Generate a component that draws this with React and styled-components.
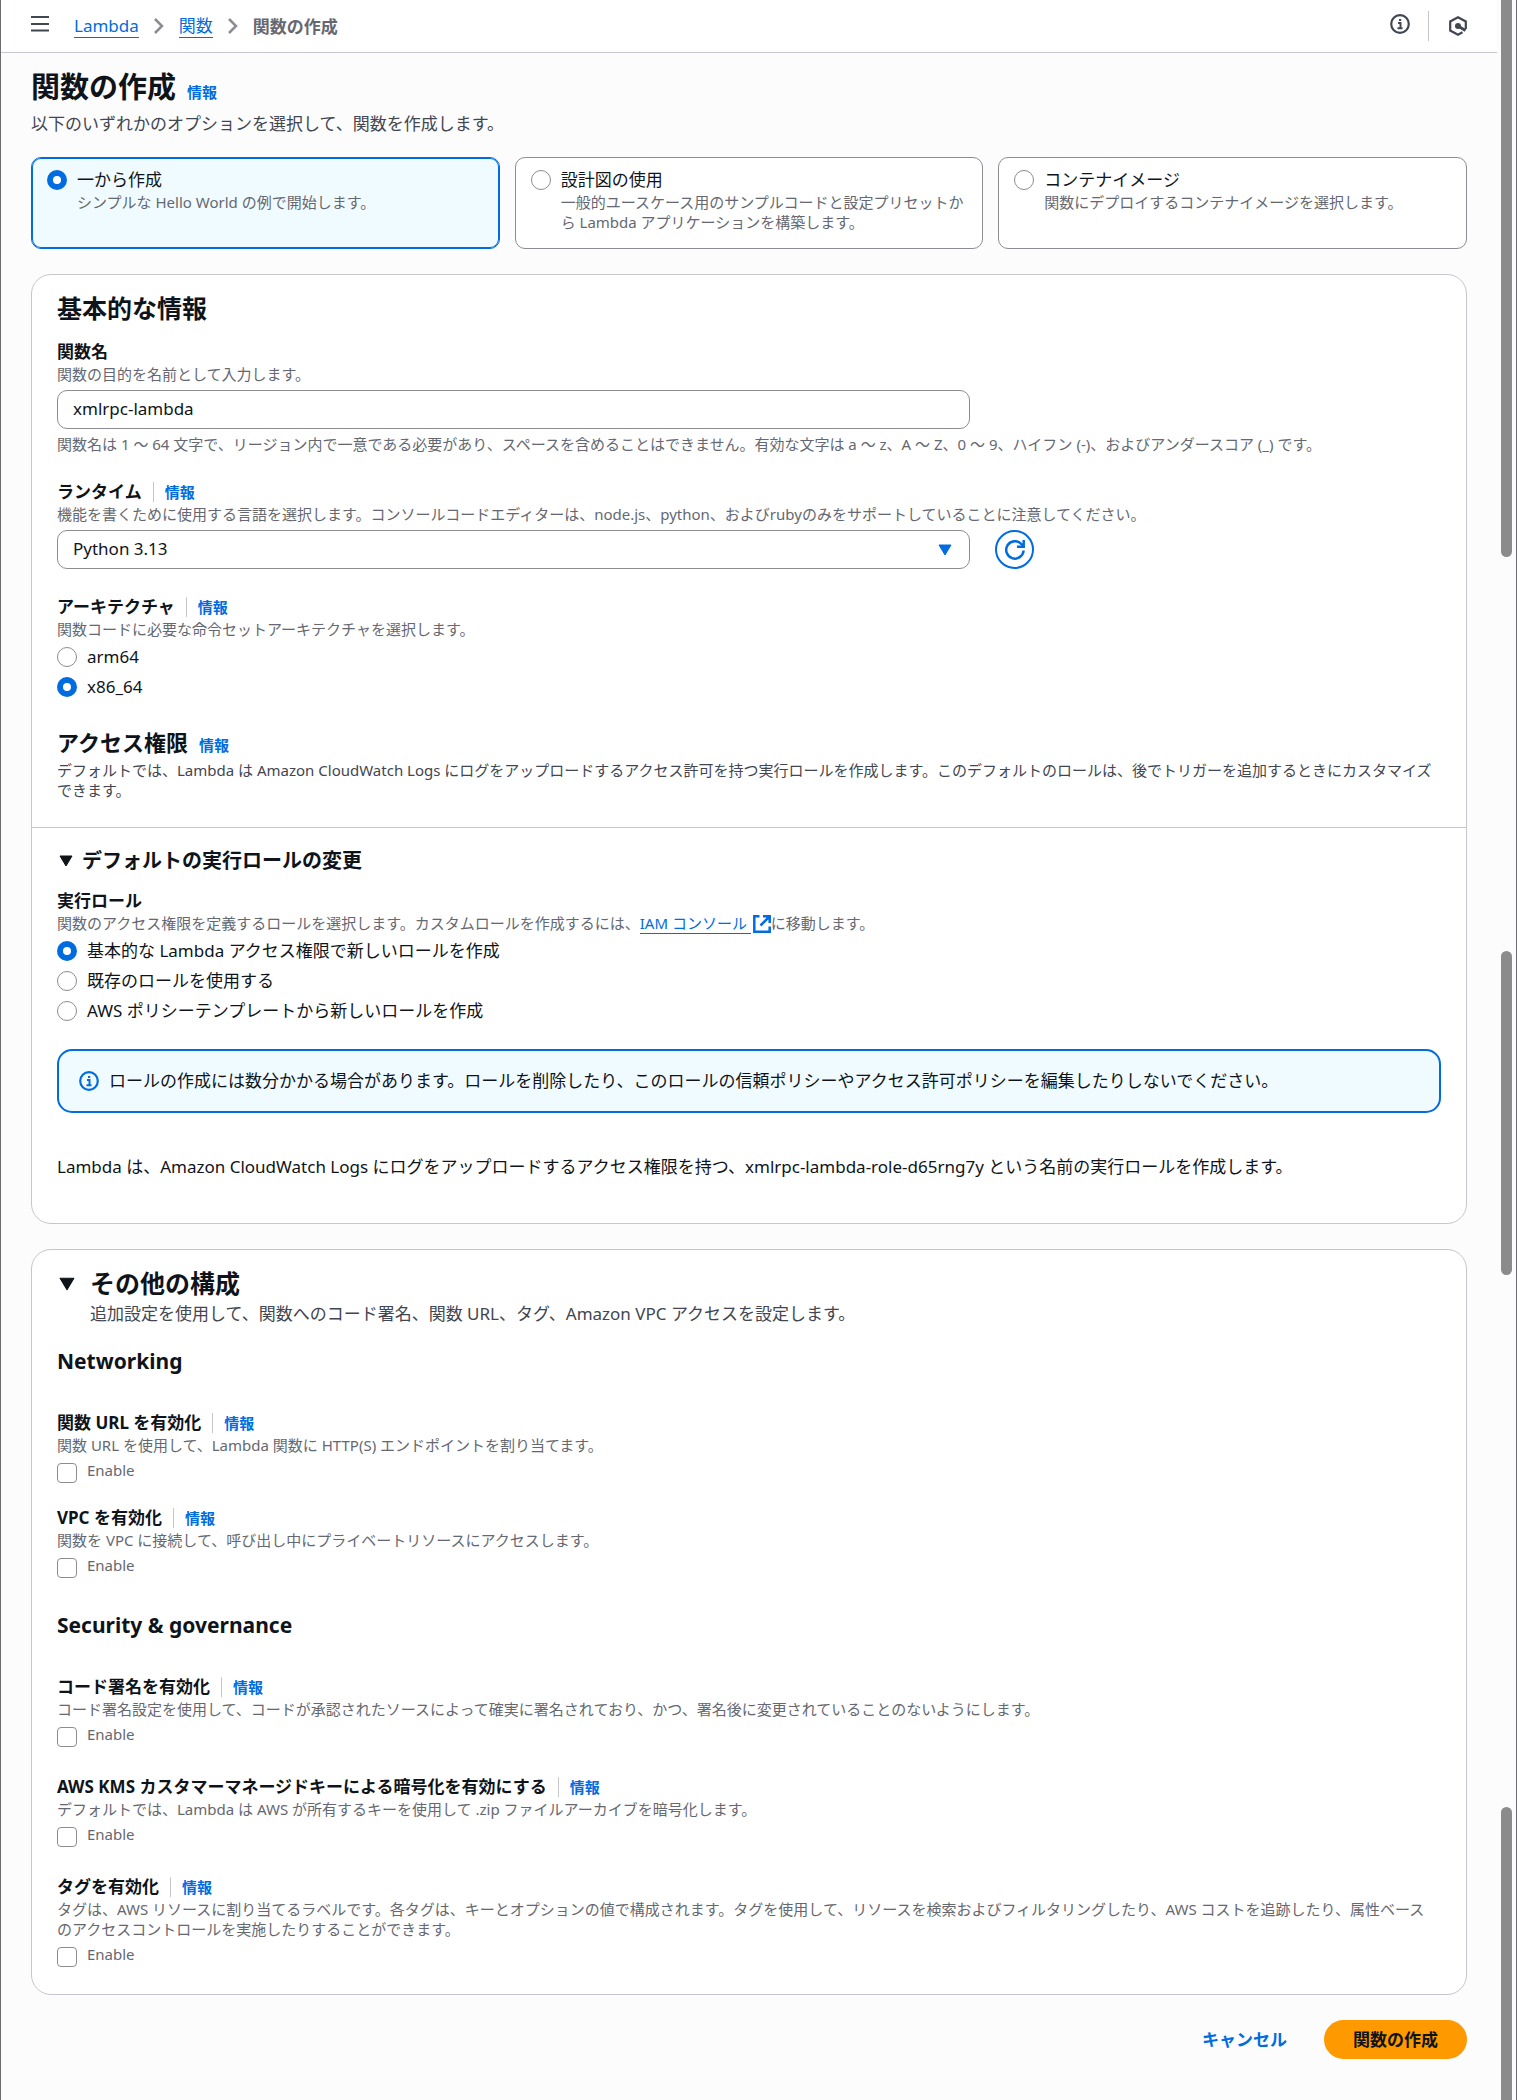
import React, { useState } from 'react';
import styled, { createGlobalStyle } from 'styled-components';

const tiles = [
    { id: 'scratch', title: '一から作成', text: 'シンプルな Hello World の例で開始します。' },
    { id: 'blueprint', title: '設計図の使用', text: '一般的ユースケース用のサンプルコードと設定プリセットから Lambda アプリケーションを構築します。' },
    { id: 'container', title: 'コンテナイメージ', text: '関数にデプロイするコンテナイメージを選択します。' },
];

const architectures = ['arm64', 'x86_64'];

const roles = [
    '基本的な Lambda アクセス権限で新しいロールを作成',
    '既存のロールを使用する',
    'AWS ポリシーテンプレートから新しいロールを作成',
];

const networking = [
    { id: 'url', label: '関数 URL を有効化', text: '関数 URL を使用して、Lambda 関数に HTTP(S) エンドポイントを割り当てます。' },
    { id: 'vpc', label: 'VPC を有効化', text: '関数を VPC に接続して、呼び出し中にプライベートリソースにアクセスします。' },
];

const security = [
    { id: 'signing', label: 'コード署名を有効化', text: 'コード署名設定を使用して、コードが承認されたソースによって確実に署名されており、かつ、署名後に変更されていることのないようにします。' },
    { id: 'kms', label: 'AWS KMS カスタマーマネージドキーによる暗号化を有効にする', text: 'デフォルトでは、Lambda は AWS が所有するキーを使用して .zip ファイルアーカイブを暗号化します。' },
    { id: 'tags', label: 'タグを有効化', text: 'タグは、AWS リソースに割り当てるラベルです。各タグは、キーとオプションの値で構成されます。タグを使用して、リソースを検索およびフィルタリングしたり、AWS コストを追跡したり、属性ベースのアクセスコントロールを実施したりすることができます。' },
];

const MenuIcon = () => (
    <svg width="18" height="18" viewBox="0 0 18 18" stroke="#424650" strokeWidth="2">
        <path d="M0 2h18M0 9h18M0 15.500h18" />
    </svg>
);

const ChevronIcon = () => (
    <svg width="10" height="16" viewBox="0 0 10 16" fill="none" stroke="#8c8c94" strokeWidth="2.500">
        <path d="M1 1l7 7-7 7" />
    </svg>
);

const InfoIcon = () => (
    <svg width="20" height="20" viewBox="0 0 20 20" fill="none" stroke="currentColor" strokeWidth="2.200">
        <circle cx="10" cy="10" r="8.800" />
        <path d="M8 9h2.500v5M7.500 14.200h5M9 6h2.200" strokeWidth="2" />
    </svg>
);

const HexagonIcon = () => (
    <svg width="20" height="20" viewBox="0 0 20 20" fill="none" stroke="#424650" strokeWidth="2.200">
        <path d="M17.800 13V5.500L10 1.300 2.200 5.500v9L10 18.700l4.500-2.400" />
        <circle cx="10" cy="10" r="3" fill="#424650" stroke="none" />
        <path d="M10 10l7.500 4.500" strokeWidth="2.800" />
    </svg>
);

const RefreshIcon = () => (
    <svg width="20" height="20" viewBox="0 0 20 20" fill="none" stroke="#006ce0" strokeWidth="2.500">
        <path d="M18.600 10.500A8.700 8.700 0 1 1 16.500 4.200l2 2" />
        <path d="M18.700 0v6.700H12" />
    </svg>
);

const ExternalIcon = () => (
    <svg width="18" height="18" viewBox="0 0 18 18" fill="none" stroke="#006ce0" strokeWidth="2.500">
        <path d="M6.500 1.300H1.300v15.400h15.400V11.500M10 1.300h6.700V8M16.500 1.500L7.500 10.500" />
    </svg>
);

const Caret = ({ size = 14, color = '#0f141a' }) => (
    <svg width={size} height={size} viewBox="0 0 14 14" fill={color} stroke={color} strokeWidth="1" strokeLinejoin="round">
        <path d="M1 2h12L7 12z" />
    </svg>
);

const Info = () => <InfoLink href="#info">情報</InfoLink>;

const FieldHead = ({ label, htmlFor, info }) => (
    <LabelRow>
        <FieldLabel as={htmlFor ? 'label' : 'span'} htmlFor={htmlFor}>{label}</FieldLabel>
        {info && <LabelDivider />}
        {info && <Info />}
    </LabelRow>
);

const RadioList = ({ name, options, value, onChange }) => (
    <Options role="radiogroup" aria-label={name}>
        {options.map((option) => (
            <Option key={option}>
                <Radio name={name} checked={value === option} onChange={() => onChange(option)} />
                {option}
            </Option>
        ))}
    </Options>
);

const EnableField = ({ item }) => (
    <div>
        <FieldHead label={item.label} info />
        <HelpText id={`${item.id}-text`}>{item.text}</HelpText>
        <EnableLabel>
            <Checkbox aria-describedby={`${item.id}-text`} />
            Enable
        </EnableLabel>
    </div>
);

const App = () => {
    const [tile, setTile] = useState('scratch');
    const [name, setName] = useState('xmlrpc-lambda');
    const [arch, setArch] = useState('x86_64');
    const [role, setRole] = useState(roles[0]);

    return (
        <Shell>
            <GlobalStyle />
            <Main>
                <TopBar>
                    <IconButton $raised aria-label="メニュー"><MenuIcon /></IconButton>
                    <Breadcrumbs>
                        <CrumbLink href="#lambda">Lambda</CrumbLink>
                        <ChevronIcon />
                        <CrumbLink href="#functions">関数</CrumbLink>
                        <ChevronIcon />
                        <CurrentCrumb>関数の作成</CurrentCrumb>
                    </Breadcrumbs>
                    <IconButton $raised aria-label="情報"><InfoIcon /></IconButton>
                    <BarDivider />
                    <IconButton aria-label="ツール"><HexagonIcon /></IconButton>
                </TopBar>

                <Content>
                    <TitleRow>
                        <PageTitle>関数の作成</PageTitle>
                        <Info />
                    </TitleRow>
                    <Lead>以下のいずれかのオプションを選択して、関数を作成します。</Lead>

                    <Tiles>
                        {tiles.map((item) => (
                            <Tile key={item.id} $selected={tile === item.id}>
                                <Radio name="method" checked={tile === item.id} onChange={() => setTile(item.id)} />
                                <div>
                                    <TileTitle>{item.title}</TileTitle>
                                    <Description>{item.text}</Description>
                                </div>
                            </Tile>
                        ))}
                    </Tiles>

                    <Card>
                        <CardSection>
                            <SectionTitle>基本的な情報</SectionTitle>
                            <Fields>
                                <div>
                                    <FieldHead label="関数名" htmlFor="name" />
                                    <Description>関数の目的を名前として入力します。</Description>
                                    <ControlRow>
                                        <ControlBox>
                                            <TextInput id="name" value={name} onChange={(e) => setName(e.target.value)} />
                                        </ControlBox>
                                    </ControlRow>
                                    <Constraint>関数名は 1 ～ 64 文字で、リージョン内で一意である必要があり、スペースを含めることはできません。有効な文字は a ～ z、A ～ Z、0 ～ 9、ハイフン (-)、およびアンダースコア (_) です。</Constraint>
                                </div>
                                <div>
                                    <FieldHead label="ランタイム" htmlFor="runtime" info />
                                    <Description>機能を書くために使用する言語を選択します。コンソールコードエディターは、node.js、python、およびrubyのみをサポートしていることに注意してください。</Description>
                                    <ControlRow>
                                        <ControlBox>
                                            <SelectInput id="runtime" defaultValue="Python 3.13">
                                                <option>Python 3.13</option>
                                            </SelectInput>
                                            <SelectArrow><Caret color="#006ce0" /></SelectArrow>
                                        </ControlBox>
                                        <RoundButton aria-label="更新"><RefreshIcon /></RoundButton>
                                    </ControlRow>
                                </div>
                                <div>
                                    <FieldHead label="アーキテクチャ" info />
                                    <Description>関数コードに必要な命令セットアーキテクチャを選択します。</Description>
                                    <RadioList name="アーキテクチャ" options={architectures} value={arch} onChange={setArch} />
                                </div>
                            </Fields>
                            <Permissions>
                                <TitleRow>
                                    <SubTitle>アクセス権限</SubTitle>
                                    <Info />
                                </TitleRow>
                                <PermissionText>デフォルトでは、Lambda は Amazon CloudWatch Logs にログをアップロードするアクセス許可を持つ実行ロールを作成します。このデフォルトのロールは、後でトリガーを追加するときにカスタマイズできます。</PermissionText>
                            </Permissions>
                        </CardSection>

                        <CardSection $divided>
                            <ExpandButton aria-expanded="true">
                                <Caret />
                                デフォルトの実行ロールの変更
                            </ExpandButton>
                            <FieldHead label="実行ロール" />
                            <Description>
                                関数のアクセス権限を定義するロールを選択します。カスタムロールを作成するには、
                                <ExternalLink href="#iam"><span>IAM コンソール </span><ExternalIcon /></ExternalLink>
                                に移動します。
                            </Description>
                            <RadioList name="実行ロール" options={roles} value={role} onChange={setRole} />
                            <Alert role="status">
                                <InfoIcon />
                                <AlertText>ロールの作成には数分かかる場合があります。ロールを削除したり、このロールの信頼ポリシーやアクセス許可ポリシーを編集したりしないでください。</AlertText>
                            </Alert>
                            <Paragraph>Lambda は、Amazon CloudWatch Logs にログをアップロードするアクセス権限を持つ、xmlrpc-lambda-role-d65rng7y という名前の実行ロールを作成します。</Paragraph>
                        </CardSection>
                    </Card>

                    <Card>
                        <CardSection>
                            <ExpandHeader>
                                <ExpandButton $large aria-expanded="true">
                                    <Caret size={16} />
                                    その他の構成
                                </ExpandButton>
                                <ExpandText>追加設定を使用して、関数へのコード署名、関数 URL、タグ、Amazon VPC アクセスを設定します。</ExpandText>
                            </ExpandHeader>
                            <GroupTitle>Networking</GroupTitle>
                            <EnableGroup $gap={22}>
                                {networking.map((item) => <EnableField key={item.id} item={item} />)}
                            </EnableGroup>
                            <GroupTitle>Security &amp; governance</GroupTitle>
                            <EnableGroup $gap={27}>
                                {security.map((item) => <EnableField key={item.id} item={item} />)}
                            </EnableGroup>
                        </CardSection>
                    </Card>

                    <Actions>
                        <CancelButton>キャンセル</CancelButton>
                        <PrimaryButton>関数の作成</PrimaryButton>
                    </Actions>
                </Content>
            </Main>

            <Gutter aria-hidden="true">
                <Thumb $grow={557} $bottom />
                <Space $grow={394} />
                <Thumb $grow={324} $top $bottom />
                <Space $grow={532} />
                <Thumb $grow={293} $top />
            </Gutter>
        </Shell>
    );
};

const GlobalStyle = createGlobalStyle`
    * {
        box-sizing: border-box;
    }

    body {
        margin: 0;
        background: #fcfcfd;
        color: #0f141a;
        font-family: "Noto Sans", "Noto Sans CJK JP", sans-serif;
        font-size: 17px;
        line-height: 25px;
    }

    button, input, select {
        font: inherit;
        color: inherit;
        margin: 0;
    }

    button {
        cursor: pointer;
    }

    svg {
        display: block;
        flex: none;
    }
`;

const Shell = styled.div`
    display: flex;
    min-height: 100vh;
    border-left: 1px solid #6b6c70;
    border-right: 1px solid #6b6c70;
`;

const Main = styled.main`
    flex: 1;
    min-width: 0;
`;

const Gutter = styled.div`
    width: 19px;
    flex: none;
    display: flex;
    flex-direction: column;
    padding: 0 4px;
`;

const Space = styled.div`
    flex: ${(props) => props.$grow} 0 0;
`;

const Thumb = styled(Space)`
    background: #8b8b8b;
    border-radius: ${(props) => (props.$top ? '6px 6px' : '0 0')} ${(props) => (props.$bottom ? '6px 6px' : '0 0')};
`;

const TopBar = styled.header`
    display: flex;
    align-items: center;
    height: 53px;
    padding: 0 29px 0 30px;
    background: #fff;
    border-bottom: 1px solid #c6c6cd;
`;

const IconButton = styled.button`
    display: flex;
    padding: 0 0 ${(props) => (props.$raised ? '4px' : '0')};
    border: 0;
    background: none;
    color: #424650;
`;

const Breadcrumbs = styled.nav`
    flex: 1;
    display: flex;
    align-items: center;
    gap: 15px;
    margin-left: 25px;
`;

const CrumbLink = styled.a`
    color: #006ce0;
    line-height: 22px;
    text-decoration: none;
    border-bottom: 1px solid #006ce0;
`;

const CurrentCrumb = styled.span`
    color: #656871;
    font-weight: 700;
`;

const BarDivider = styled.div`
    width: 1px;
    height: 30px;
    margin: 0 19px 0 18px;
    background: #c6c6cd;
`;

const Content = styled.div`
    padding: 14px 30px 40px;
`;

const TitleRow = styled.div`
    display: flex;
    align-items: baseline;
    gap: 11px;
`;

const PageTitle = styled.h1`
    margin: 0;
    font-size: 29px;
    line-height: 40px;
`;

const InfoLink = styled.a`
    color: #006ce0;
    font-size: 15px;
    line-height: 20px;
    font-weight: 700;
    text-decoration: none;
`;

const Lead = styled.p`
    margin: 4px 0 21px;
    color: #424650;
`;

const Tiles = styled.div`
    display: grid;
    grid-template-columns: repeat(3, 1fr);
    gap: 15px;
`;

const Tile = styled.label`
    display: flex;
    align-items: flex-start;
    gap: 10px;
    padding: 9px 15px 16px;
    border: 1px solid ${(props) => (props.$selected ? '#006ce0' : '#8c8c94')};
    border-radius: 10px;
    background: ${(props) => (props.$selected ? '#f0fbff' : '#fff')};
    box-shadow: ${(props) => (props.$selected ? 'inset 0 0 0 1px #006ce0' : 'none')};
    cursor: pointer;
`;

const TileTitle = styled.div`
    line-height: 25px;
`;

const Radio = styled.input.attrs({ type: 'radio' })`
    appearance: none;
    flex: none;
    width: 20px;
    height: 20px;
    margin: 3px 0 2px;
    border: 1px solid #8c8c94;
    border-radius: 50%;
    background: #fff;

    &:checked {
        border: 6px solid #006ce0;
    }
`;

const Checkbox = styled.input.attrs({ type: 'checkbox' })`
    appearance: none;
    flex: none;
    width: 20px;
    height: 20px;
    border: 1px solid #8c8c94;
    border-radius: 4px;
    background: #fff;

    &:checked {
        background: #006ce0;
    }
`;

const Card = styled.section`
    margin-top: 25px;
    border: 1px solid #c6c6cd;
    border-radius: 20px;
    background: #fff;
`;

const CardSection = styled.div`
    padding: ${(props) => (props.$divided ? '20px 25px 44px' : '18px 25px 27px')};
    border-top: ${(props) => (props.$divided ? '1px solid #c6c6cd' : '0')};
`;

const SectionTitle = styled.h2`
    margin: 0 0 15px;
    font-size: 25px;
    line-height: 31px;
`;

const SubTitle = styled.h3`
    margin: 0;
    font-size: 22px;
    line-height: 30px;
`;

const GroupTitle = styled(SubTitle)`
    font-size: 21px;
`;

const Fields = styled.div`
    display: flex;
    flex-direction: column;
    gap: 25px;
`;

const LabelRow = styled.div`
    display: flex;
    align-items: center;
    gap: 11px;
`;

const FieldLabel = styled.span`
    font-weight: 700;
`;

const LabelDivider = styled.span`
    width: 1px;
    height: 20px;
    background: #c6c6cd;
`;

const Description = styled.div`
    color: #656871;
    font-size: 15px;
    line-height: 20px;
`;

const HelpText = styled(Description)`
    padding-right: 5px;
`;

const PermissionText = styled(Description)`
    margin-top: 3px;
    color: #424650;
`;

const Constraint = styled(Description)`
    margin-top: 5px;
`;

const ControlRow = styled.div`
    display: flex;
    gap: 25px;
    margin-top: 6px;
`;

const ControlBox = styled.div`
    position: relative;
    width: 66%;
`;

const TextInput = styled.input`
    display: block;
    width: 100%;
    height: 39px;
    padding: 0 15px 2px;
    border: 1px solid #8c8c94;
    border-radius: 10px;
    background: #fff;
`;

const SelectInput = styled.select`
    appearance: none;
    display: block;
    width: 100%;
    height: 39px;
    padding: 0 15px 2px;
    border: 1px solid #8c8c94;
    border-radius: 10px;
    background: #fff;
`;

const SelectArrow = styled.span`
    position: absolute;
    right: 18px;
    top: 13px;
    pointer-events: none;
`;

const RoundButton = styled.button`
    display: flex;
    align-items: center;
    justify-content: center;
    width: 39px;
    height: 39px;
    padding: 0;
    border: 2px solid #006ce0;
    border-radius: 50%;
    background: #fff;
`;

const Options = styled.div`
    display: flex;
    flex-direction: column;
    align-items: flex-start;
    gap: 5px;
    margin-top: 5px;
`;

const Option = styled.label`
    display: flex;
    gap: 10px;
`;

const Permissions = styled.div`
    margin-top: 28px;
`;

const ExpandButton = styled.button`
    display: flex;
    align-items: center;
    gap: ${(props) => (props.$large ? '15px' : '9px')};
    margin-bottom: ${(props) => (props.$large ? '0' : '15px')};
    padding: 0 2px;
    border: 0;
    background: none;
    font-size: ${(props) => (props.$large ? '25px' : '20px')};
    line-height: ${(props) => (props.$large ? '31px' : '25px')};
    font-weight: 700;
`;

const ExternalLink = styled.a`
    color: #006ce0;
    text-decoration: none;

    span {
        border-bottom: 1px solid #006ce0;
        white-space: pre;
    }

    svg {
        display: inline-block;
        vertical-align: -4px;
        margin-left: 2px;
    }
`;

const Alert = styled.div`
    display: flex;
    align-items: center;
    gap: 10px;
    margin-top: 26px;
    padding: 18px 20px;
    border: 2px solid #006ce0;
    border-radius: 15px;
    background: #f0fbff;

    svg {
        color: #006ce0;
    }
`;

const AlertText = styled.div`
    line-height: 24px;
`;

const Paragraph = styled.p`
    margin: 41px 0 0;
`;

const ExpandHeader = styled.div`
    margin-bottom: 20px;
`;

const ExpandText = styled.p`
    margin: 2px 0 0 33px;
    color: #424650;
`;

const EnableGroup = styled.div`
    display: flex;
    flex-direction: column;
    gap: ${(props) => props.$gap}px;
    margin-top: 34px;

    & + h3 {
        margin-top: 32px;
    }
`;

const EnableLabel = styled.label`
    display: flex;
    width: fit-content;
    gap: 10px;
    margin-top: 8px;
    color: #656871;
    font-size: 15px;
    line-height: 14px;
`;

const Actions = styled.div`
    display: flex;
    justify-content: flex-end;
    gap: 10px;
    margin-top: 25px;
`;

const CancelButton = styled.button`
    height: 39px;
    padding: 0 27px;
    border: 0;
    background: none;
    color: #006ce0;
    font-weight: 700;
`;

const PrimaryButton = styled.button`
    height: 39px;
    padding: 0 29px;
    border: 0;
    border-radius: 20px;
    background: #ff9900;
    font-weight: 700;
`;

export default App;
